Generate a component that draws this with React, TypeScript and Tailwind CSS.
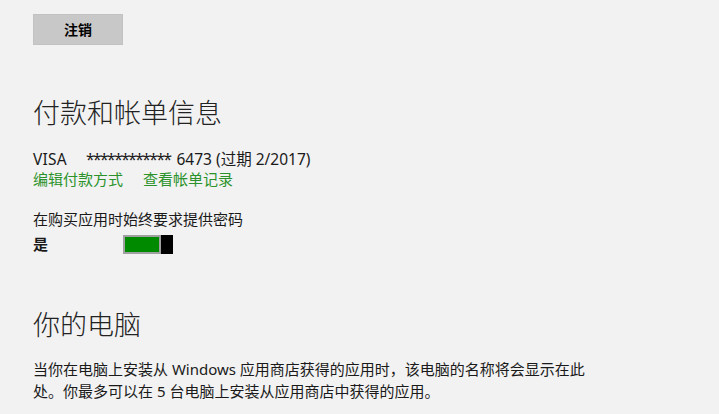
import React from "react";

const font = { fontFamily: '"Noto Sans", "Noto Sans CJK SC", sans-serif' };

export default function App() {
  return (
    <div
      className="w-[719px] h-[414px] overflow-hidden bg-[#f2f2f2] text-[#1a1a1a] pl-[33px] pt-[14px] flex flex-col items-start"
      style={font}
    >
      <button className="w-[90px] h-[31px] bg-[#c8c8c8] border border-[#c2c2c2] text-[14px] font-bold text-black flex items-center justify-center">
        注销
      </button>

      <h2 className="mt-[50px] text-[27px] leading-[36px] font-light text-[#222]">付款和帐单信息</h2>

      <div className="mt-[18px] text-[15.5px] leading-[20px] flex">
        <span className="w-[53px] tracking-[0.2px]">VISA</span>
        <span>
          <span className="tracking-[-1.5px]">************</span>
          <span className="ml-[6px]">6473 (过期 2/2017)</span>
        </span>
      </div>
      <div className="text-[15px] leading-[20px] flex gap-[20px] text-[#2b922b]">
        <span>编辑付款方式</span>
        <span>查看帐单记录</span>
      </div>

      <div className="mt-[20px] text-[15px] leading-[20px]">在购买应用时始终要求提供密码</div>
      <div className="mt-[5px] flex items-center h-[20px]">
        <span className="w-[90px] text-[15px] font-bold leading-[20px]">是</span>
        <div className="flex h-[19px]">
          <div className="w-[38px] h-[19px] border-2 border-[#a0a0a0] bg-[#008a00]" />
          <div className="w-[12px] h-[19px] bg-black" />
        </div>
      </div>

      <h2 className="mt-[53px] text-[27px] leading-[36px] font-light text-[#222]">你的电脑</h2>

      <p className="mt-[15px] text-[15px] leading-[22px] whitespace-nowrap">
        当你在电脑上安装从 Windows 应用商店获得的应用时，该电脑的名称将会显示在此
        <br />
        处。你最多可以在 5 台电脑上安装从应用商店中获得的应用。
      </p>
    </div>
  );
}
